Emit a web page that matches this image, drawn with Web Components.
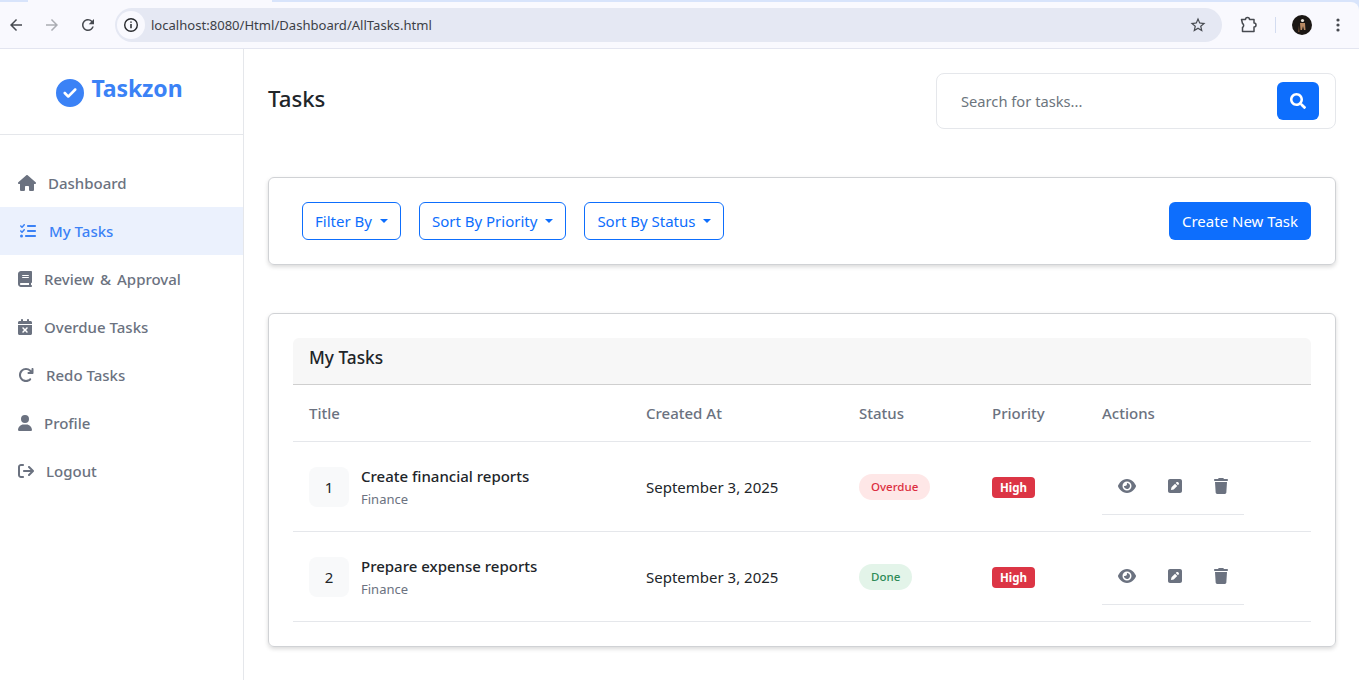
<!DOCTYPE html>
<html lang="en"><head><meta charset="utf-8"><title>Tasks</title>
<style>
html,body{margin:0;padding:0;height:680px;overflow:hidden;background:#fff}
body{font-family:"Noto Sans","Open Sans",sans-serif;color:#212529;display:flex;flex-direction:column}
</style></head><body>
<browser-bar url="localhost:8080/Html/Dashboard/AllTasks.html"></browser-bar>
<app-shell>
  <side-bar slot="side">
    <nav-item icon="house" gap="12" left="18" size="16">Dashboard</nav-item>
    <nav-item icon="list" active gap="13" left="20" size="16">My Tasks</nav-item>
    <nav-item icon="book" gap="12" left="18" size="16" style="word-spacing:2px">Review &amp; Approval</nav-item>
    <nav-item icon="cal" gap="12" left="18" size="16">Overdue Tasks</nav-item>
    <nav-item icon="redo" gap="12" left="18" size="16">Redo Tasks</nav-item>
    <nav-item icon="user" gap="12" left="18" size="16">Profile</nav-item>
    <nav-item icon="logout" gap="12" left="18" size="16">Logout</nav-item>
  </side-bar>
  <page-head heading="Tasks"></page-head>
  <tool-card>
    <drop-btn>Filter By</drop-btn>
    <drop-btn>Sort By Priority</drop-btn>
    <drop-btn>Sort By Status</drop-btn>
    <primary-btn slot="end">Create New Task</primary-btn>
  </tool-card>
  <task-table heading="My Tasks">
    <task-row num="1" name="Create financial reports" cat="Finance" date="September 3, 2025" status="Overdue" kind="bad" prio="High"></task-row>
    <task-row num="2" name="Prepare expense reports" cat="Finance" date="September 3, 2025" status="Done" kind="ok" prio="High"></task-row>
  </task-table>
</app-shell>
<script>
const I={
check:[512,'M256 512A256 256 0 1 0 256 0a256 256 0 1 0 0 512zM369 209L241 337c-9.4 9.4-24.6 9.4-33.9 0l-64-64c-9.4-9.4-9.4-24.6 0-33.9s24.6-9.4 33.9 0l47 47L335 175c9.4-9.4 24.6-9.4 33.9 0s9.4 24.6 0 33.9z'],
search:[512,'M505 442.7L405.3 343c-4.5-4.5-10.6-7-17-7H372c27.6-35.3 44-79.7 44-128C416 93.1 322.9 0 208 0S0 93.1 0 208s93.1 208 208 208c48.3 0 92.7-16.4 128-44v16.3c0 6.4 2.5 12.5 7 17l99.7 99.7c9.4 9.4 24.6 9.4 33.9 0l28.3-28.3c9.4-9.4 9.4-24.6.1-34zM208 336c-70.7 0-128-57.2-128-128 0-70.7 57.2-128 128-128 70.7 0 128 57.2 128 128 0 70.7-57.2 128-128 128z'],
house:[576,'M575.8 255.5c0 18-15 32.1-32 32.1h-32l.7 160.2c0 2.7-.2 5.4-.5 8.1V472c0 22.1-17.9 40-40 40H456c-1.1 0-2.2 0-3.3-.1c-1.4 .1-2.8 .1-4.2 .1H416 392c-22.1 0-40-17.9-40-40V448 384c0-17.7-14.3-32-32-32H256c-17.7 0-32 14.3-32 32v64 24c0 22.1-17.9 40-40 40H160 128.1c-1.5 0-3-.1-4.5-.2c-1.2 .1-2.4 .2-3.6 .2H104c-22.1 0-40-17.9-40-40V360c0-.9 0-1.9 .1-2.8V287.6H32c-18 0-32-14-32-32.1c0-9 3-17 10-24L266.4 8c7-7 15-8 22-8s15 2 21 7L564.8 231.5c8 7 12 15 11 24z'],
list:[512,'M152.1 38.2c9.9 8.9 10.7 24 1.8 33.9l-72 80c-4.4 4.9-10.6 7.8-17.2 7.9s-12.9-2.4-17.6-7L7 113C-2.3 103.6-2.3 88.4 7 79s24.6-9.4 33.9 0l22.1 22.1 55.1-61.2c8.9-9.9 24-10.7 33.9-1.8zm0 160c9.9 8.9 10.7 24 1.8 33.9l-72 80c-4.4 4.9-10.6 7.8-17.2 7.9s-12.9-2.4-17.6-7L7 273c-9.4-9.4-9.4-24.6 0-33.9s24.6-9.4 33.9 0l22.1 22.1 55.1-61.2c8.9-9.9 24-10.7 33.9-1.8zM224 96c0-17.7 14.3-32 32-32H480c17.7 0 32 14.3 32 32s-14.3 32-32 32H256c-17.7 0-32-14.3-32-32zm0 160c0-17.7 14.3-32 32-32H480c17.7 0 32 14.3 32 32s-14.3 32-32 32H256c-17.7 0-32-14.3-32-32zM160 416c0-17.7 14.3-32 32-32H480c17.7 0 32 14.3 32 32s-14.3 32-32 32H192c-17.7 0-32-14.3-32-32zM48 368a48 48 0 1 1 0 96 48 48 0 1 1 0-96z'],
book:[448,'M96 0C43 0 0 43 0 96V416c0 53 43 96 96 96H384h32c17.7 0 32-14.3 32-32s-14.3-32-32-32V384c17.7 0 32-14.3 32-32V32c0-17.7-14.3-32-32-32H384 96zm0 384H352v64H96c-17.7 0-32-14.3-32-32s14.3-32 32-32zm32-240c0-8.8 7.2-16 16-16H336c8.8 0 16 7.2 16 16s-7.2 16-16 16H144c-8.8 0-16-7.2-16-16zm16 48H336c8.8 0 16 7.2 16 16s-7.2 16-16 16H144c-8.8 0-16-7.2-16-16s7.2-16 16-16z'],
cal:[448,'M128 0c17.7 0 32 14.3 32 32V64H288V32c0-17.7 14.3-32 32-32s32 14.3 32 32V64h48c26.5 0 48 21.5 48 48v48H0V112C0 85.5 21.5 64 48 64H96V32c0-17.7 14.3-32 32-32zM0 192H448V464c0 26.5-21.5 48-48 48H48c-26.5 0-48-21.5-48-48V192zM305 305c9.4-9.4 9.4-24.6 0-33.9s-24.6-9.4-33.9 0l-47 47-47-47c-9.4-9.4-24.6-9.4-33.9 0s-9.4 24.6 0 33.9l47 47-47 47c-9.4 9.4-9.4 24.6 0 33.9s24.6 9.4 33.9 0l47-47 47 47c9.4 9.4 24.6 9.4 33.9 0s9.4-24.6 0-33.9l-47-47 47-47z'],
redo:[512,'M386.3 160H336c-17.7 0-32 14.3-32 32s14.3 32 32 32H464c17.7 0 32-14.3 32-32V64c0-17.7-14.3-32-32-32s-32 14.3-32 32v51.2L414.4 97.6c-87.5-87.5-229.3-87.5-316.8 0s-87.5 229.3 0 316.8s229.3 87.5 316.8 0c12.5-12.5 12.5-32.8 0-45.3s-32.8-12.5-45.3 0c-62.5 62.5-163.8 62.5-226.3 0s-62.5-163.8 0-226.3s163.8-62.5 226.3 0L386.3 160z'],
user:[448,'M224 256A128 128 0 1 0 224 0a128 128 0 1 0 0 256zm-45.7 48C79.8 304 0 383.8 0 482.3C0 498.7 13.3 512 29.7 512H418.3c16.4 0 29.7-13.3 29.7-29.7C448 383.8 368.2 304 269.7 304H178.3z'],
logout:[512,'M502.6 278.6c12.5-12.5 12.5-32.8 0-45.3l-128-128c-12.5-12.5-32.8-12.5-45.3 0s-12.5 32.8 0 45.3L402.7 224 192 224c-17.7 0-32 14.3-32 32s14.3 32 32 32l210.7 0-73.4 73.4c-12.5 12.5-12.5 32.8 0 45.3s32.8 12.5 45.3 0l128-128zM160 96c17.7 0 32-14.3 32-32s-14.3-32-32-32L96 32C43 32 0 75 0 128L0 384c0 53 43 96 96 96l64 0c17.7 0 32-14.3 32-32s-14.3-32-32-32l-64 0c-17.7 0-32-14.3-32-32l0-256c0-17.7 14.3-32 32-32l64 0z'],
eye:[576,'M288 32c-80.8 0-145.5 36.8-192.6 80.6C48.6 156 17.3 208 2.5 243.7c-3.3 7.9-3.3 16.7 0 24.6C17.3 304 48.6 356 95.4 399.4C142.5 443.2 207.2 480 288 480s145.5-36.8 192.6-80.6c46.8-43.5 78.1-95.4 93-131.1c3.3-7.9 3.3-16.7 0-24.6c-14.9-35.7-46.2-87.7-93-131.1C433.5 68.8 368.8 32 288 32zM144 256a144 144 0 1 1 288 0 144 144 0 1 1 -288 0zm144-64c0 35.3-28.7 64-64 64c-7.1 0-13.9-1.2-20.3-3.3c-5.5-1.8-11.9 1.6-11.7 7.4c.3 6.9 1.3 13.8 3.2 20.7c13.7 51.2 66.4 81.6 117.6 67.9s81.6-66.4 67.9-117.6c-11.1-41.5-47.8-69.4-88.6-71.1c-5.8-.2-9.2 6.1-7.4 11.7c2.1 6.4 3.3 13.2 3.3 20.3z'],
pen:[448,'M64 32C28.7 32 0 60.7 0 96V416c0 35.3 28.7 64 64 64H384c35.3 0 64-28.7 64-64V96c0-35.3-28.7-64-64-64H64zM325.8 139.7l14.4 14.4c15.6 15.6 15.6 40.9 0 56.6l-21.4 21.4-71-71 21.4-21.4c15.6-15.6 40.9-15.6 56.6 0zM119.9 289L225.1 183.8l71 71L190.9 359.9c-4.1 4.1-9.2 7-14.9 8.4l-60.1 15c-5.5 1.4-11.2-.2-15.2-4.2s-5.6-9.7-4.2-15.2l15-60.1c1.4-5.6 4.3-10.8 8.4-14.9z'],
trash:[448,'M135.2 17.7L128 32H32C14.3 32 0 46.3 0 64S14.3 96 32 96H416c17.7 0 32-14.3 32-32s-14.3-32-32-32H320l-7.2-14.3C307.4 6.8 296.3 0 284.2 0H163.8c-12.1 0-23.2 6.8-28.6 17.7zM416 128H32L53.2 467c1.6 25.3 22.6 45 47.9 45H346.9c25.3 0 46.3-19.7 47.9-45L416 128z']
};
const svg=(n,h,c='currentColor')=>{const[w,d]=I[n];return `<svg xmlns="http://www.w3.org/2000/svg" viewBox="0 0 ${w} 512" height="${h}" width="${h*w/512}" fill="${c}" style="display:block;flex:none"><path d="${d}"/></svg>`};
class Base extends HTMLElement{
  constructor(){super();this.attachShadow({mode:'open'})}
  connectedCallback(){this.shadowRoot.innerHTML=this.render()}
  a(n,d=''){return this.getAttribute(n)??d}
}
const def=(n,r)=>customElements.define(n,class extends Base{render(){return r.call(this)}});

def('browser-bar',function(){return `<style>
:host{display:block;flex:none;height:49px;background:#d8e4fb;box-sizing:border-box}
.top{height:2px;display:flex;padding:0 0 0 28px}
.tab{width:244px;height:2px;background:#f9f9fe}
.bar{height:47px;box-sizing:border-box;background:#f9f9fe;border-bottom:1px solid #e3e5f0;border-radius:0 8px 0 0;display:flex;align-items:center;color:#474a50}
.nav{width:36px;display:flex;justify-content:center;flex:none}
.url{flex:1;height:34px;border-radius:17px;background:#e5e8f3;display:flex;align-items:center;padding:0 15px 0 2px;min-width:0;margin-left:9px}
.info{width:28px;height:28px;border-radius:50%;background:#f9f9fe;display:flex;align-items:center;justify-content:center;flex:none;margin-right:6px}
.u{font:13.07px "Noto Sans",sans-serif;color:#3c3f47;white-space:nowrap;flex:1}
.sep{width:1px;height:16px;background:#d3dcf0;margin:0 16px 0 10px;flex:none}
</style>
<div class="top"><div class="tab"></div></div>
<div class="bar">
<div class="nav" style="margin-left:-2px"><svg width="18" height="18" viewBox="0 0 24 24" fill="#474a50"><path d="M20 11H7.83l5.59-5.59L12 4l-8 8 8 8 1.41-1.41L7.83 13H20v-2z"/></svg></div>
<div class="nav"><svg width="18" height="18" viewBox="0 0 24 24" fill="#abadb3"><path d="M4 11h12.17l-5.59-5.59L12 4l8 8-8 8-1.41-1.41L16.17 13H4v-2z"/></svg></div>
<div class="nav"><svg width="18" height="18" viewBox="0 0 24 24" fill="#474a50"><path d="M17.65 6.35A7.958 7.958 0 0 0 12 4c-4.42 0-7.99 3.58-7.99 8s3.57 8 7.99 8c3.73 0 6.84-2.55 7.73-6h-2.08A5.99 5.99 0 0 1 12 18c-3.31 0-6-2.69-6-6s2.69-6 6-6c1.66 0 3.14.69 4.22 1.78L13 11h7V4l-2.35 2.35z"/></svg></div>
<div class="url">
<div class="info"><svg width="16" height="16" viewBox="0 0 16 16" fill="none" stroke="#26282c" stroke-width="1.4"><circle cx="8" cy="8" r="6.3"/><path d="M8 7v4.2M8 4.6v1.2" stroke-width="1.5"/></svg></div>
<span class="u">${this.a('url')}</span>
<svg width="18" height="18" viewBox="0 0 24 24" fill="#474a50" style="flex:none"><path d="M22 9.24l-7.19-.62L12 2 9.19 8.63 2 9.24l5.46 4.73L5.82 21 12 17.27 18.18 21l-1.63-7.03L22 9.24zM12 15.4l-3.76 2.27 1-4.28-3.32-2.88 4.38-.38L12 6.1l1.71 4.04 4.38.38-3.32 2.88 1 4.28L12 15.4z"/></svg>
</div>
<div class="nav" style="width:34px;margin-left:9px"><svg width="18" height="18" viewBox="0 0 18 18" fill="none" stroke="#474a50" stroke-width="1.5" stroke-linejoin="round"><path d="M2.500 3.500h4a2 2 0 0 1 4 0h4.500v3.500a2 2 0 0 1 0 4v4.500H3.500v-4a2.300 2.300 0 0 0 0-4z"/></svg></div>
<div class="sep"></div>
<svg width="20" height="20" viewBox="0 0 20 20" style="flex:none;margin-right:24px"><circle cx="10" cy="10" r="10" fill="#1b1714"/><circle cx="10.500" cy="5.500" r="1.600" fill="#e8e4dc"/><path d="M8 8h5l.5 7h-1.500l-1-4-1 4H8.500z" fill="#b98a63"/><path d="M7 10l-1 7h1.500z" fill="#6b4a33"/></svg>
<svg width="4" height="14" viewBox="0 0 4 14" fill="#474a50" style="flex:none;margin-right:19px"><circle cx="2" cy="2" r="1.600"/><circle cx="2" cy="7" r="1.600"/><circle cx="2" cy="12" r="1.600"/></svg>
</div>`});

def('app-shell',function(){return `<style>
:host{display:grid;grid-template-columns:244px 1fr;flex:1;min-height:0;background:#fff}
.side{border-right:1px solid #e5e7eb;box-sizing:border-box}
main{padding:24px 23px 0 24px;display:flex;flex-direction:column;min-width:0}
</style><div class="side"><slot name="side"></slot></div><main><slot></slot></main>`});

def('side-bar',function(){return `<style>
:host{display:block}
.logo{height:86px;box-sizing:border-box;border-bottom:1px solid #e5e7eb;display:flex;justify-content:center;padding-top:29px;gap:8px;color:#3b82f6;padding-right:5px}
.logo b{font-size:23px;font-weight:700;line-height:24px;display:block;margin-top:-2px;letter-spacing:-.1px}
.logo svg{margin-top:1px}
nav{padding-top:24px}
</style><div class="logo">${svg('check',28)}<b>Taskzon</b></div><nav><slot></slot></nav>`});

def('nav-item',function(){const act=this.hasAttribute('active');return `<style>
:host{display:flex;align-items:center;height:48px;box-sizing:border-box;padding-left:${this.a('left')}px;gap:${this.a('gap')}px;color:${act?'#3b82f6':'#6b7280'};background:${act?'#ebf1fd':'transparent'};font-size:15px;font-weight:500;white-space:nowrap}
</style>${svg(this.a('icon'),+this.a('size'))}<span><slot></slot></span>`});

def('page-head',function(){return `<style>
:host{display:flex;justify-content:space-between;align-items:flex-start;height:80px;margin-bottom:24px;flex:none}
h1{margin:10px 0 0;font-size:22.2px;font-weight:500;line-height:32px;color:#212529}
.s{width:400px;height:56px;box-sizing:border-box;border:1px solid #e5e7eb;border-radius:8px;display:flex;align-items:center;padding:0 16px 0 24px;justify-content:space-between}
.ph{font-size:14.700px;color:#6c757d}
.b{width:42px;height:38px;background:#0d6efd;border-radius:6px;display:flex;align-items:center;justify-content:center}
</style><h1>${this.a('heading')}</h1><div class="s"><span class="ph">Search for tasks...</span><div class="b">${svg('search',16,'#fff')}</div></div>`});

def('tool-card',function(){return `<style>
:host{display:flex;justify-content:space-between;align-items:center;height:88px;box-sizing:border-box;border:1px solid #d0d2d5;border-radius:6px;box-shadow:0 2px 4px rgba(0,0,0,.15);padding:0 24px 0 33px;flex:none;margin-bottom:48px}
.l{display:flex;gap:18px}
</style><div class="l"><slot></slot></div><slot name="end"></slot>`});

def('drop-btn',function(){return `<style>
:host{display:flex;align-items:center;height:38px;box-sizing:border-box;border:1px solid #0d6efd;border-radius:6px;color:#0d6efd;padding:0 12px;font-size:15px;white-space:nowrap}
i{display:block;width:0;height:0;margin-left:8px;border-top:4.800px solid currentColor;border-left:4.800px solid transparent;border-right:4.800px solid transparent;margin-top:-1px}
</style><slot></slot><i></i>`});

def('primary-btn',function(){return `<style>
:host{display:flex;align-items:center;height:38px;background:#0d6efd;border-radius:6px;color:#fff;padding:0 13px;font-size:15px;white-space:nowrap}
</style><slot></slot>`});

const cols='337px 213px 133px 110px 1fr';
def('task-table',function(){return `<style>
:host{display:block;height:334px;box-sizing:border-box;border:1px solid #d0d2d5;border-radius:6px;box-shadow:0 2px 4px rgba(0,0,0,.15);padding:24px;flex:none}
.h{height:47px;box-sizing:border-box;background:#f7f7f7;border-bottom:1px solid #cfcfcf;border-radius:6px 6px 0 0;padding:0 16px 7px;display:flex;align-items:center;font-size:17.300px;font-weight:500;color:#212529}
.t{display:grid;grid-template-columns:${cols};height:57px;box-sizing:border-box;border-bottom:1px solid #e5e7eb;align-items:center;font-size:15px;font-weight:500;color:#6b7280}
.t span{padding-left:16px}
</style><div class="h">${this.a('heading')}</div>
<div class="t"><span>Title</span><span>Created At</span><span>Status</span><span>Priority</span><span>Actions</span></div><slot></slot>`});

def('task-row',function(){const bad=this.a('kind')==='bad';return `<style>
:host{display:grid;grid-template-columns:${cols};height:90px;box-sizing:border-box;border-bottom:1px solid #e5e7eb;align-items:center;font-size:15px;color:#212529}
.c{padding-left:16px}
.ti{display:flex;align-items:center;gap:12px}
.n{width:40px;height:40px;border-radius:8px;background:#f8f9fa;display:flex;align-items:center;justify-content:center}
.nm{font-weight:500;line-height:20px;color:#212529;white-space:nowrap}
.cat{font-size:13px;line-height:18px;margin-top:4px;color:#6b7280}
.st{display:inline-block;font-size:11.500px;font-weight:500;line-height:26px;padding:0 12px;border-radius:13px;background:${bad?'#fee7e7':'#e3f4e9'};color:${bad?'#dc2f3f':'#2e8b57'}}
.pr{display:inline-block;font-size:11.500px;font-weight:700;line-height:21px;padding:0 8px;border-radius:4px;background:#dc3545;color:#fff}
.ac{display:flex;width:142px;height:56px;box-sizing:border-box;border-bottom:1px solid #e5e7eb;align-items:center;color:#6b7280;padding:0 0 2px 16px;margin:1px 0 0 16px}
.ac div{display:flex;justify-content:center;align-items:center}
</style>
<div class="c ti"><div class="n">${this.a('num')}</div><div><div class="nm">${this.a('name')}</div><div class="cat">${this.a('cat')}</div></div></div>
<div class="c" style="white-space:nowrap">${this.a('date')}</div>
<div class="c"><span class="st">${this.a('status')}</span></div>
<div class="c"><span class="pr">${this.a('prio')}</span></div>
<div class="ac"><div style="width:18px">${svg('eye',16)}</div><div style="width:14px;margin-left:32px">${svg('pen',16)}</div><div style="width:14px;margin-left:32px">${svg('trash',16)}</div></div>`});
</script>
</body></html>
